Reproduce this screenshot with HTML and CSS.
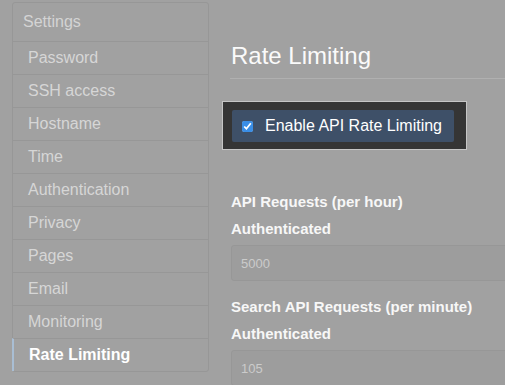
FILE: index.html
```html
<!DOCTYPE html>
<html lang="en">
<head>
  <meta charset="UTF-8" />
  <meta name="viewport" content="width=device-width, initial-scale=1.0"/>
  <title>Rate Limiting</title>
  <link rel="stylesheet" href="styles.css">
</head>
<body>
  <nav class="menu">
    <div class="menu-heading">Settings</div>
    <a class="menu-item" href="#">Password</a>
    <a class="menu-item" href="#">SSH access</a>
    <a class="menu-item" href="#">Hostname</a>
    <a class="menu-item" href="#">Time</a>
    <a class="menu-item" href="#">Authentication</a>
    <a class="menu-item" href="#">Privacy</a>
    <a class="menu-item" href="#">Pages</a>
    <a class="menu-item" href="#">Email</a>
    <a class="menu-item" href="#">Monitoring</a>
    <a class="menu-item selected" href="#">Rate Limiting</a>
  </nav>

  <main class="content">
    <h2 class="page-title">Rate Limiting</h2>

    <div class="highlight">
      <label class="toggle">
        <input type="checkbox" checked>
        <span>Enable API Rate Limiting</span>
      </label>
    </div>

    <div class="group first">
      <h3>API Requests (per hour)</h3>
      <h4>Authenticated</h4>
      <input class="field" type="text" value="5000">
    </div>

    <div class="group">
      <h3>Search API Requests (per minute)</h3>
      <h4>Authenticated</h4>
      <input class="field" type="text" value="105">
    </div>
  </main>
</body>
</html>
```

FILE: styles.css
```css
body { margin: 0; padding: 2px 0 0 12px; background: #a1a1a1; font-family: "Liberation Sans", Arial, sans-serif; display: flex; align-items: flex-start; overflow: hidden; height: 385px; box-sizing: border-box; }

.menu { width: 197px; flex: none; border: 1px solid #979797; border-radius: 3px; box-sizing: border-box; }
.menu-heading { height: 38px; line-height: 38px; padding-left: 10px; font-size: 16px; color: #d4d4d4; }
.menu-item { display: block; height: 32px; line-height: 32px; padding-left: 15px; border-top: 1px solid #979797; font-size: 16px; color: #d6d6d6; text-decoration: none; }
.menu-item.selected { font-weight: bold; color: #fff; padding-left: 15px; border-left: 2px solid #a9bed4; margin-left: -1px; }

.content { flex: 1; margin-left: 22px; padding-top: 39px; min-width: 0; }
.page-title { margin: 0; font-size: 24px; font-weight: normal; line-height: 30px; color: #fafafa; padding-bottom: 7px; border-bottom: 1px solid #b0b0b0; margin-left: -1px; padding-left: 1px; }

.highlight { display: inline-block; margin: 22px 0 0 -9px; padding: 8px 12px 7px 9px; background: #353535; border: 1px solid #c6c6c6; }
.toggle { display: flex; align-items: center; width: 222px; height: 32px; box-sizing: border-box; padding-left: 10px; background: #3e5068; border-radius: 2px; color: #fff; font-size: 16px; }
.toggle input { margin: 0 12px 0 0; width: 11px; height: 11px; accent-color: #3a8ee6; }

.group h3 { margin: 0; font-size: 15px; line-height: 20px; color: #f7f7f7; }
.group h4 { margin: 7px 0 6px; font-size: 15px; line-height: 20px; color: #f7f7f7; }
.group.first { margin-top: 42px; }
.group + .group { margin-top: 16px; }
.field { display: block; width: 300px; height: 36px; box-sizing: border-box; padding: 0 9px; background: #9d9d9d; border: 1px solid #979797; border-radius: 3px; font-family: "Liberation Sans", Arial, sans-serif; font-size: 13px; color: #cbcbcb; outline: none; }
```
